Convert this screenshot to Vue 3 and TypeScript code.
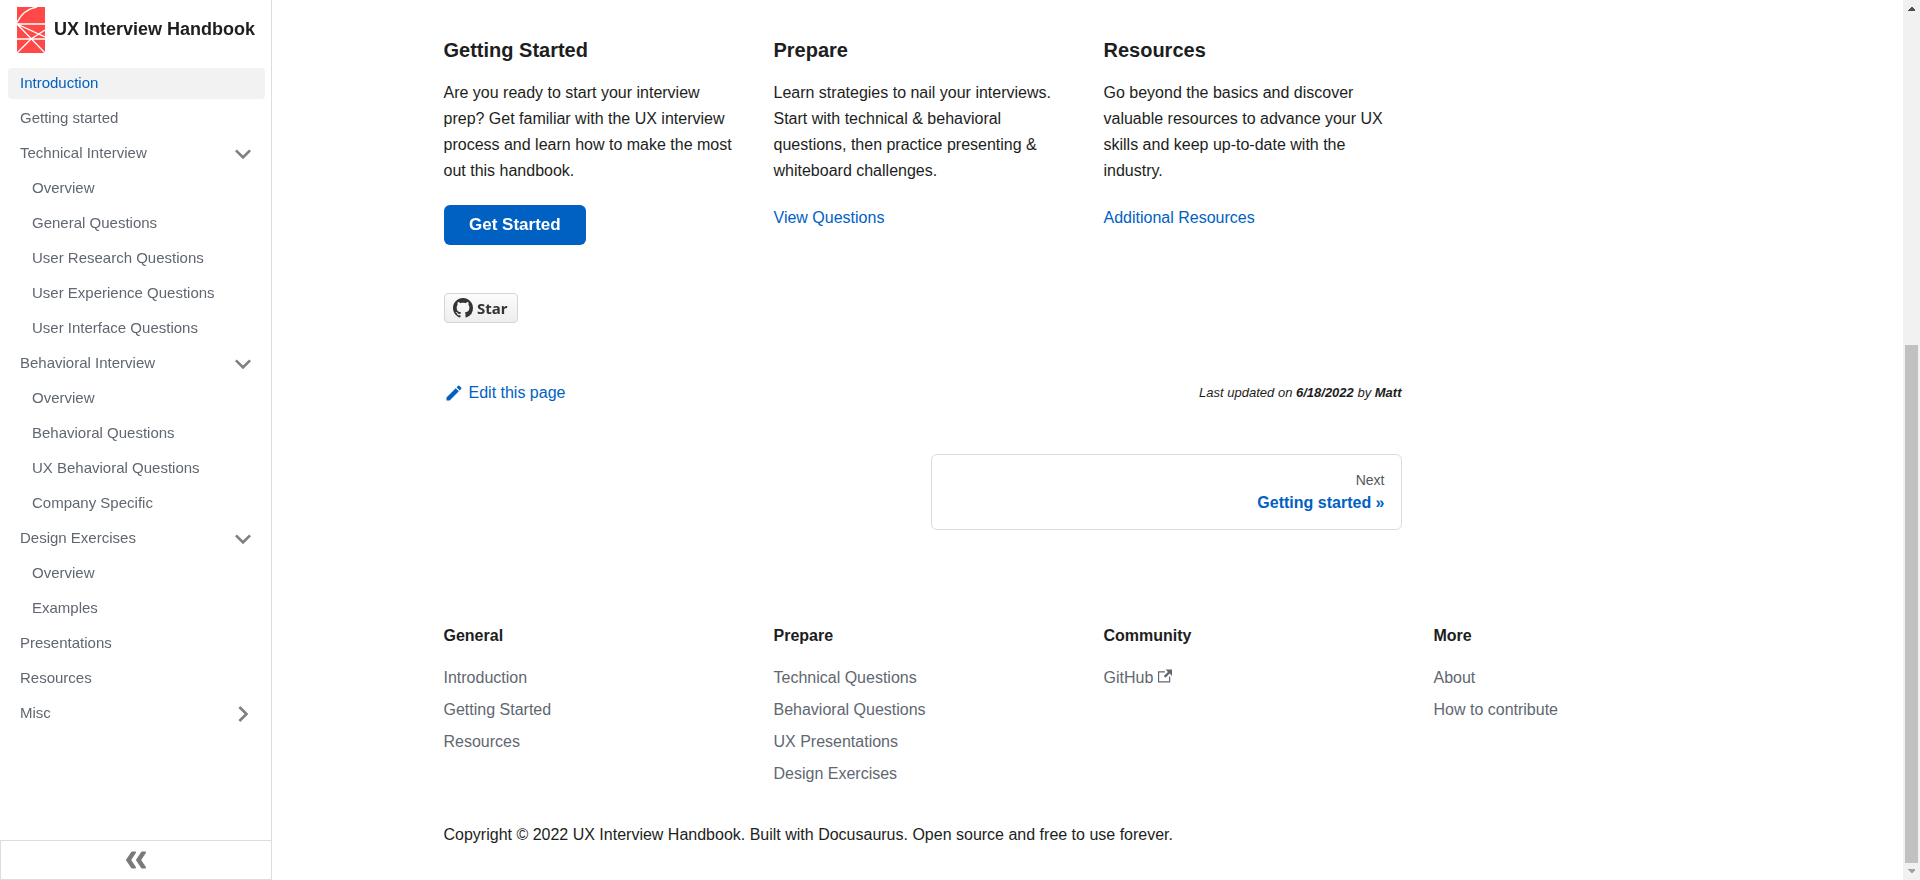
<script setup lang="ts">
import { reactive } from 'vue'

interface Category {
  label: string
  active?: boolean
  open?: boolean
  items?: string[]
}

const menu = reactive<Category[]>([
  { label: 'Introduction', active: true },
  { label: 'Getting started' },
  {
    label: 'Technical Interview',
    open: true,
    items: [
      'Overview',
      'General Questions',
      'User Research Questions',
      'User Experience Questions',
      'User Interface Questions',
    ],
  },
  {
    label: 'Behavioral Interview',
    open: true,
    items: ['Overview', 'Behavioral Questions', 'UX Behavioral Questions', 'Company Specific'],
  },
  { label: 'Design Exercises', open: true, items: ['Overview', 'Examples'] },
  { label: 'Presentations' },
  { label: 'Resources' },
  { label: 'Misc', open: false, items: [] },
])

const features = [
  {
    title: 'Getting Started',
    text: 'Are you ready to start your interview prep? Get familiar with the UX interview process and learn how to make the most out this handbook.',
    link: 'Get Started',
    primary: true,
  },
  {
    title: 'Prepare',
    text: 'Learn strategies to nail your interviews. Start with technical & behavioral questions, then practice presenting & whiteboard challenges.',
    link: 'View Questions',
    primary: false,
  },
  {
    title: 'Resources',
    text: 'Go beyond the basics and discover valuable resources to advance your UX skills and keep up-to-date with the industry.',
    link: 'Additional Resources',
    primary: false,
  },
]

const footer = [
  { title: 'General', links: ['Introduction', 'Getting Started', 'Resources'] },
  {
    title: 'Prepare',
    links: ['Technical Questions', 'Behavioral Questions', 'UX Presentations', 'Design Exercises'],
  },
  { title: 'Community', links: ['GitHub'], external: true },
  { title: 'More', links: ['About', 'How to contribute'] },
]
</script>

<template>
  <div class="page">
    <aside class="sidebar">
      <a class="brand" href="#">
        <svg class="logo" viewBox="0 0 28 46" aria-hidden="true">
          <rect width="28" height="46" fill="#ff4949" />
          <g fill="none" stroke="#fff" stroke-width="1.3">
            <path d="M0 15.5C4 7 11 1.500 20 0" />
            <path d="M0 17H28M0 32H28" />
            <path d="M0 17L28 46M0 46L14 32L28 23M0 17L28 30" />
          </g>
        </svg>
        <b>UX Interview Handbook</b>
      </a>
      <nav class="menu" aria-label="Docs sidebar">
        <ul>
          <li v-for="entry in menu" :key="entry.label">
            <button
              v-if="entry.items"
              type="button"
              class="menu-link category"
              :aria-expanded="entry.open"
              @click="entry.open = !entry.open"
            >
              {{ entry.label }}
              <svg class="caret" :class="{ open: entry.open }" viewBox="0 0 24 24" aria-hidden="true">
                <path d="M7.41 15.41L12 10.83l4.59 4.58L18 14l-6-6-6 6z" />
              </svg>
            </button>
            <a v-else class="menu-link" :class="{ active: entry.active }" href="#">{{ entry.label }}</a>
            <ul v-if="entry.items && entry.items.length && entry.open" class="submenu">
              <li v-for="item in entry.items" :key="item">
                <a class="menu-link" href="#">{{ item }}</a>
              </li>
            </ul>
          </li>
        </ul>
      </nav>
      <button type="button" class="collapse" aria-label="Collapse sidebar">
        <svg viewBox="0 0 20 20" aria-hidden="true">
          <path d="M9.992 10.023c0 .2-.062.399-.172.547l-4.996 7.492a.982.982 0 01-.828.454H1c-.55 0-1-.453-1-1 0-.2.059-.403.168-.551l4.629-6.942L.168 3.078A.939.939 0 010 2.528c0-.548.45-.997 1-.997h2.996c.352 0 .649.18.828.45L9.82 9.472c.11.148.172.347.172.55zm0 0" />
          <path d="M19.98 10.023c0 .2-.058.399-.168.547l-4.996 7.492a.987.987 0 01-.828.454h-3c-.547 0-.996-.453-.996-1 0-.2.059-.403.168-.551l4.625-6.942-4.625-6.945a.939.939 0 01-.168-.55 1 1 0 01.996-.997h3c.348 0 .649.18.828.45l4.996 7.492c.11.148.168.347.168.55zm0 0" />
        </svg>
      </button>
    </aside>

    <div class="content">
      <main class="columns">
        <article class="doc">
          <div class="features">
            <section v-for="f in features" :key="f.title">
              <h3>{{ f.title }}</h3>
              <p>{{ f.text }}</p>
              <a :class="f.primary ? 'cta' : 'link'" href="#">{{ f.link }}</a>
            </section>
          </div>

          <a class="star" href="#">
            <svg viewBox="0 0 16 16" aria-hidden="true">
              <path d="M8 0C3.58 0 0 3.58 0 8c0 3.54 2.29 6.53 5.47 7.59.4.07.55-.17.55-.38 0-.19-.01-.82-.01-1.49-2.01.37-2.53-.49-2.69-.94-.09-.23-.48-.94-.82-1.13-.28-.15-.68-.52-.01-.53.63-.01 1.08.58 1.23.82.72 1.21 1.87.87 2.33.66.07-.52.28-.87.51-1.07-1.78-.2-3.64-.89-3.64-3.95 0-.87.31-1.59.82-2.15-.08-.2-.36-1.02.08-2.12 0 0 .67-.21 2.2.82.64-.18 1.32-.27 2-.27.68 0 1.36.09 2 .27 1.53-1.04 2.2-.82 2.2-.82.44 1.1.16 1.92.08 2.12.51.56.82 1.27.82 2.15 0 3.07-1.87 3.75-3.65 3.95.29.25.54.73.54 1.48 0 1.07-.01 1.93-.01 2.2 0 .21.15.46.55.38A8.013 8.013 0 0016 8c0-4.42-3.58-8-8-8z" />
            </svg>
            <span>Star</span>
          </a>

          <div class="meta">
            <a class="edit" href="#">
              <svg viewBox="0 0 40 40" aria-hidden="true">
                <path d="m34.5 11.7l-3 3.1-6.3-6.3 3.1-3q0.5-0.5 1.2-0.5t1.1 0.5l3.9 3.9q0.5 0.4 0.5 1.1t-0.5 1.2z m-29.5 17.1l18.4-18.5 6.3 6.3-18.4 18.4h-6.3v-6.2z" />
              </svg>
              <span>Edit this page</span>
            </a>
            <span class="updated">Last updated on <b>6/18/2022</b> by <b>Matt</b></span>
          </div>

          <nav class="pagination" aria-label="Docs pages">
            <a class="next" href="#">
              <span class="sub">Next</span>
              <span class="label">Getting started »</span>
            </a>
          </nav>
        </article>
      </main>

      <footer>
        <div class="columns">
          <section v-for="col in footer" :key="col.title">
            <h4>{{ col.title }}</h4>
            <ul>
              <li v-for="link in col.links" :key="link">
                <a href="#">{{ link }}<svg v-if="col.external" class="external" viewBox="0 0 24 24" aria-hidden="true"><path d="M21 13v10h-21v-19h12v2h-10v15h17v-8h2zm3-12h-10.988l4.035 4-6.977 7.070 2.828 2.828 6.977-7.070 4.125 4.172v-11z" /></svg></a>
              </li>
            </ul>
          </section>
        </div>
        <p class="copyright">
          Copyright © 2022 UX Interview Handbook. Built with Docusaurus. Open source and free to use forever.
        </p>
      </footer>
    </div>

    <div class="scrollbar" aria-hidden="true">
      <svg viewBox="0 0 17 17" shape-rendering="crispEdges"><path d="M5 11V10L8 7H9L12 10V11Z" fill="#505050" /></svg>
      <div class="track"><div class="thumb"></div></div>
      <svg viewBox="0 0 17 17" shape-rendering="crispEdges"><path d="M5 6V7L8 10H9L12 7V6Z" fill="#a3a3a3" /></svg>
    </div>
  </div>
</template>

<style>
body {
  margin: 0;
  background: #fff;
}
</style>

<style scoped>
* {
  box-sizing: border-box;
}

.page {
  display: flex;
  min-height: 100vh;
  color: #1c1e21;
  font: 16px/26px "Liberation Sans", Arial, sans-serif;
}

a {
  color: inherit;
  text-decoration: none;
}

button {
  font: inherit;
  cursor: pointer;
}

ul {
  margin: 0;
  padding: 0;
  list-style: none;
}

.sidebar {
  display: flex;
  flex: 0 0 272px;
  flex-direction: column;
  border-right: 1px solid #dadde1;
  will-change: transform;
}

.brand {
  display: flex;
  gap: 9px;
  height: 60px;
  padding: 7px 8px 0 17px;
  font-size: 18px;
  line-height: 44px;
  white-space: nowrap;
}

.logo {
  flex: none;
  width: 28px;
  height: 46px;
}

.menu {
  flex: 1;
  padding: 8px 6px 8px 8px;
  color: #606770;
  font-size: 15px;
}

.menu li {
  margin-bottom: 4px;
}

.menu-link {
  display: flex;
  height: 31px;
  padding: 0 12px;
  border-radius: 4px;
  line-height: 30px;
}

.category {
  justify-content: space-between;
  width: 100%;
  padding-right: 6px;
  border: 0;
  background: none;
  color: inherit;
  text-align: left;
}

.active {
  background: #f2f2f2;
  color: #0061c2;
}

.submenu {
  padding: 4px 0 0 12px;
}

.submenu li:last-child {
  margin-bottom: 0;
}

.caret {
  width: 32px;
  height: 32px;
  fill: #808080;
  transform: rotate(90deg);
}

.caret.open {
  transform: rotate(180deg);
}

.collapse {
  display: flex;
  align-items: center;
  justify-content: center;
  height: 40px;
  padding: 0;
  border: 1px solid #dadde1;
  border-right: 0;
  background: none;
}

.collapse svg {
  width: 20px;
  height: 20px;
  fill: #7a7a7a;
  transform: rotate(180deg);
}

.content {
  flex: 1;
  min-width: 0;
  max-width: 1320px;
  margin: 0 auto;
  padding: 38px 16px 32px;
}

.columns {
  display: grid;
  grid-template-columns: repeat(4, minmax(0, 1fr));
  gap: 32px;
}

.doc {
  grid-column: span 3;
}

.features {
  display: grid;
  grid-template-columns: repeat(3, minmax(0, 1fr));
  gap: 32px;
}

h3 {
  margin: 0 0 17px;
  font-size: 20px;
  line-height: 25px;
}

.features p {
  margin: 0 0 21px;
}

.link,
.edit {
  color: #0061c2;
}

.cta {
  display: inline-block;
  height: 40px;
  padding: 0 25px;
  border-radius: 6px;
  background: #0061c2;
  color: #fff;
  font-size: 17px;
  font-weight: bold;
  line-height: 40px;
  vertical-align: top;
  will-change: transform;
}

.star {
  display: inline-flex;
  align-items: center;
  gap: 4px;
  height: 30px;
  margin-top: 48px;
  padding: 0 10px 0 8px;
  border: 1px solid #d5d5d5;
  border-radius: 4px;
  background: linear-gradient(#fcfcfc, #eee);
  color: #333;
  font: bold 15px/28px "Noto Sans", sans-serif;
  vertical-align: top;
  will-change: transform;
}

.star svg {
  width: 20px;
  height: 20px;
  fill: #333;
}

.meta {
  display: flex;
  align-items: center;
  justify-content: space-between;
  margin-top: 57px;
}

.edit {
  display: flex;
  align-items: center;
  gap: 5px;
}

.edit svg {
  width: 20px;
  height: 20px;
  fill: currentColor;
}

.updated {
  font-size: 13px;
  font-style: italic;
}

.pagination {
  display: grid;
  grid-template-columns: repeat(2, minmax(0, 1fr));
  gap: 16px;
  margin-top: 48px;
}

.next {
  display: flex;
  grid-column: 2;
  flex-direction: column;
  padding: 15px 16px 13px;
  border: 1px solid #dadde1;
  border-radius: 6px;
  text-align: right;
}

.sub {
  color: #525860;
  font-size: 14px;
  line-height: 20px;
}

.label {
  color: #0061c2;
  font-weight: bold;
}

footer {
  margin-top: 96px;
}

h4 {
  margin: 0 0 16px;
  font-size: 16px;
  line-height: 20px;
}

footer ul {
  color: #606770;
  line-height: 32px;
}

.external {
  width: 14px;
  height: 14px;
  margin-left: 5px;
  fill: currentColor;
}

.copyright {
  margin: 32px 0 0;
}

.scrollbar {
  display: flex;
  flex: 0 0 17px;
  flex-direction: column;
  background: #f1f1f1;
}

.scrollbar svg {
  width: 17px;
  height: 17px;
}

.track {
  display: flex;
  flex: 1;
  flex-direction: column;
  justify-content: flex-end;
  padding: 0 2px;
}

.thumb {
  flex: 0 0 61.2%;
  background: #c1c1c1;
}
</style>
